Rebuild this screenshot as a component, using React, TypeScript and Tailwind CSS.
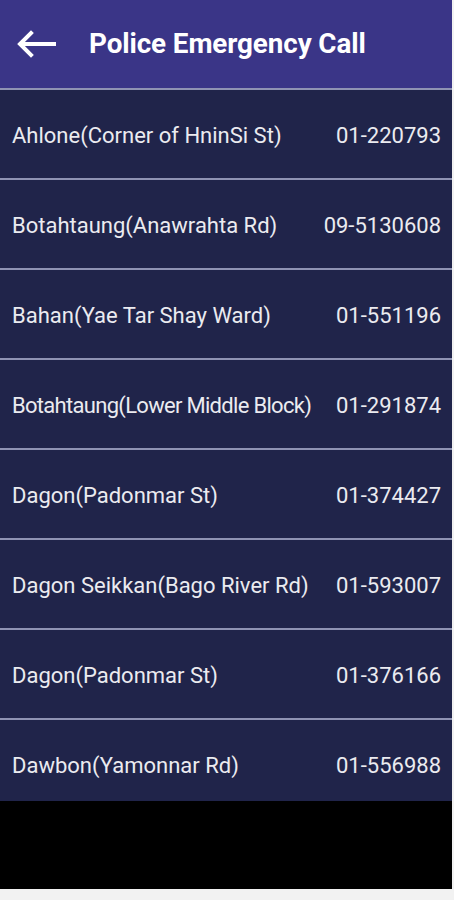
import React from "react";

const stations = [
  { name: "Ahlone(Corner of HninSi St)", phone: "01-220793" },
  { name: "Botahtaung(Anawrahta Rd)", phone: "09-5130608" },
  { name: "Bahan(Yae Tar Shay Ward)", phone: "01-551196" },
  { name: "Botahtaung(Lower Middle Block)", phone: "01-291874", tight: true },
  { name: "Dagon(Padonmar St)", phone: "01-374427" },
  { name: "Dagon Seikkan(Bago River Rd)", phone: "01-593007" },
  { name: "Dagon(Padonmar St)", phone: "01-376166" },
  { name: "Dawbon(Yamonnar Rd)", phone: "01-556988" },
];

export default function App() {
  return (
    <div className="w-[454px] h-[900px] bg-[#f2f2f2] flex flex-col overflow-hidden font-['Roboto','Liberation_Sans',sans-serif]">
      <div className="w-[452px] h-[889px] bg-black flex flex-col">
        {/* Toolbar */}
        <div className="h-[88px] bg-[#3a3587] flex items-center shrink-0">
          <svg
            width="40"
            height="28"
            viewBox="0 0 40 28"
            className="ml-[16px]"
          >
            <path
              d="M38 14H5M15 3L4 14l11 11"
              stroke="white"
              strokeWidth="4"
              fill="none"
              strokeLinecap="square"
            />
          </svg>
          <h1 className="ml-[33px] text-white text-[27.8px] font-bold tracking-[-0.1px]">
            Police Emergency Call
          </h1>
        </div>

        {/* List */}
        <div className="flex flex-col h-[713px] overflow-hidden">
          {stations.map((s, i) => (
            <div
              key={i}
              className="h-[90px] shrink-0 bg-[#20244a] border-t-2 border-[#8f93b3] flex items-center justify-between pl-[12px] pr-[11px] pt-[3px] text-[#ebebf0] text-[22px]"
            >
              <span className={s.tight ? "tracking-[-0.7px]" : ""}>
                {s.name}
              </span>
              <span>{s.phone}</span>
            </div>
          ))}
        </div>
      </div>
    </div>
  );
}
